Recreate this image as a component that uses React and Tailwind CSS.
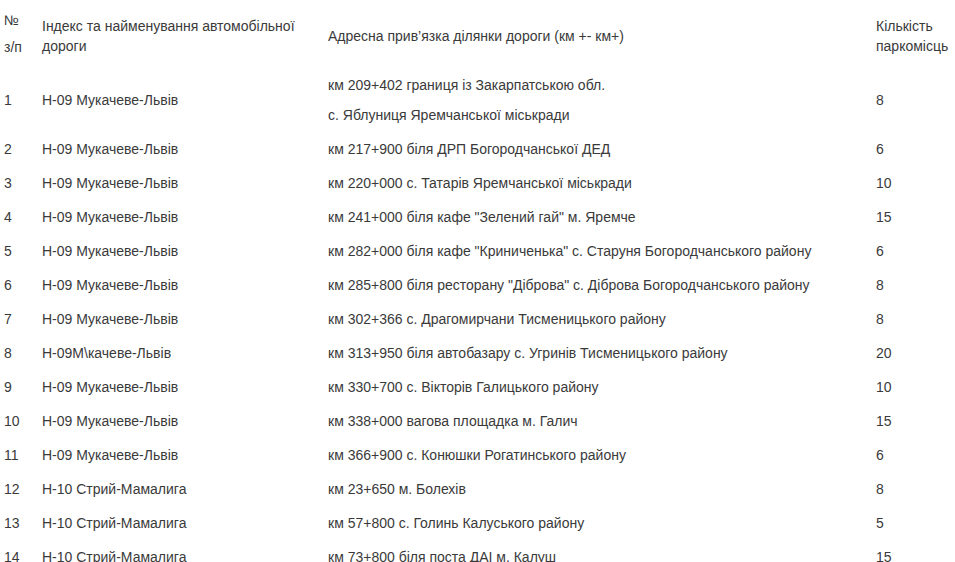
const rows = [
  ['2', 'Н-09 Мукачеве-Львів', 'км 217+900 біля ДРП Богородчанської ДЕД', '6'],
  ['3', 'Н-09 Мукачеве-Львів', 'км 220+000 с. Татарів Яремчанської міськради', '10'],
  ['4', 'Н-09 Мукачеве-Львів', 'км 241+000 біля кафе "Зелений гай" м. Яремче', '15'],
  ['5', 'Н-09 Мукачеве-Львів', 'км 282+000 біля кафе "Криниченька" с. Старуня Богородчанського району', '6'],
  ['6', 'Н-09 Мукачеве-Львів', 'км 285+800 біля ресторану "Діброва" с. Діброва Богородчанського району', '8'],
  ['7', 'Н-09 Мукачеве-Львів', 'км 302+366 с. Драгомирчани Тисменицького району', '8'],
  ['8', 'Н-09М\\качеве-Львів', 'км 313+950 біля автобазару с. Угринів Тисменицького району', '20'],
  ['9', 'Н-09 Мукачеве-Львів', 'км 330+700 с. Вікторів Галицького району', '10'],
  ['10', 'Н-09 Мукачеве-Львів', 'км 338+000 вагова площадка м. Галич', '15'],
  ['11', 'Н-09 Мукачеве-Львів', 'км 366+900 с. Конюшки Рогатинського району', '6'],
  ['12', 'Н-10 Стрий-Мамалига', 'км 23+650 м. Болехів', '8'],
  ['13', 'Н-10 Стрий-Мамалига', 'км 57+800 с. Голинь Калуського району', '5'],
  ['14', 'Н-10 Стрий-Мамалига', 'км 73+800 біля поста ДАІ м. Калуш', '15'],
];

export default function App() {
  return (
    <div className="min-h-screen bg-white text-[#3a3a3a] text-[14px] leading-5 font-['Liberation_Sans',Arial,sans-serif] pt-1">
      <table className="w-[955px] table-fixed border-collapse">
        <colgroup>
          <col className="w-[38px]" />
          <col className="w-[286px]" />
          <col className="w-[548px]" />
          <col className="w-[83px]" />
        </colgroup>
        <thead>
          <tr className="h-[64px]">
            <th className="pl-1 text-left font-normal align-top">
              <div className="mt-[6px]">№</div>
              <div className="mt-[7px]">з/п</div>
            </th>
            <th className="pl-1 text-left font-normal align-middle">
              Індекс та найменування автомобільної дороги
            </th>
            <th className="pl-1 text-left font-normal align-middle">
              Адресна прив’язка ділянки дороги (км +- км+)
            </th>
            <th className="pl-1 text-left font-normal align-middle">
              Кількість паркомісць
            </th>
          </tr>
        </thead>
        <tbody>
          <tr className="h-[64px]">
            <td className="pl-1 align-middle">1</td>
            <td className="pl-1 align-middle">Н-09 Мукачеве-Львів</td>
            <td className="pl-1 align-middle">
              <p>км 209+402 границя із Закарпатською обл.</p>
              <p className="mt-[10px]">с. Яблуниця Яремчанської міськради</p>
            </td>
            <td className="pl-1 align-middle">8</td>
          </tr>
          {rows.map((r) => (
            <tr key={r[0]} className="h-[34px]">
              <td className="pl-1 align-middle">{r[0]}</td>
              <td className="pl-1 align-middle">{r[1]}</td>
              <td className="pl-1 align-middle whitespace-nowrap">{r[2]}</td>
              <td className="pl-1 align-middle">{r[3]}</td>
            </tr>
          ))}
        </tbody>
      </table>
    </div>
  );
}
